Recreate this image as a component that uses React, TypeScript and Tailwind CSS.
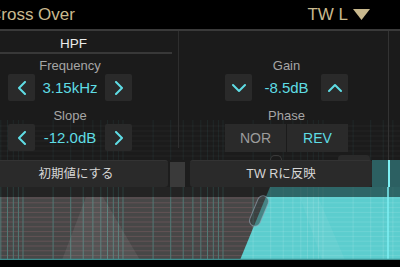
import React from 'react'

const CYAN = '#5fdde5'

function Chevron({ dir }: { dir: 'left' | 'right' | 'up' | 'down' }) {
  const pts = {
    left: '8,1 2,7 8,13',
    right: '2,1 8,7 2,13',
    up: '1,8 7,2 13,8',
    down: '1,2 7,8 13,2',
  }[dir]
  const horiz = dir === 'left' || dir === 'right'
  return (
    <svg width={horiz ? 10 : 14} height={horiz ? 14 : 10} viewBox={horiz ? '0 0 10 14' : '0 0 14 10'}>
      <polyline points={pts} fill="none" stroke={CYAN} strokeWidth={2} strokeLinecap="round" strokeLinejoin="round" />
    </svg>
  )
}

function Btn({ children }: { children: React.ReactNode }) {
  return (
    <div className="flex h-[27px] w-[27px] items-center justify-center rounded-[2px] bg-[#2a2a2a]">
      {children}
    </div>
  )
}

function Stepper({ value, prev, next }: { value: string; prev: 'left' | 'down'; next: 'right' | 'up' }) {
  return (
    <div className="flex items-center">
      <Btn>
        <Chevron dir={prev} />
      </Btn>
      <div className="flex-1 text-center text-[15px] leading-[27px] text-[#5fdde5]">{value}</div>
      <Btn>
        <Chevron dir={next} />
      </Btn>
    </div>
  )
}

function Label({ children, className = '' }: { children: React.ReactNode; className?: string }) {
  return <div className={`h-[16px] text-center text-[13px] leading-[16px] text-[#a6a6a6] ${className}`}>{children}</div>
}

// log-scale x positions for grid lines
const gridX: number[] = []
for (let d = -1; d < 4; d++) {
  for (let k = 1; k < 10; k++) {
    const x = 23 + 100 * d + 100 * Math.log10(k)
    if (x > 0 && x < 400) gridX.push(x)
  }
}

function Graph() {
  const rows: number[] = []
  for (let y = 11; y < 73; y += 4.8) rows.push(y)
  return (
    <svg width={400} height={73} viewBox="0 0 400 73" className="block">
      <defs>
        <clipPath id="teal">
          <polygon points="270,0 400,0 400,73 240,73" />
        </clipPath>
      </defs>
      <rect width={400} height={73} fill="#474747" />
      {rows.map((y) => (
        <line key={y} x1={0} x2={400} y1={y} y2={y} stroke="#645356" strokeWidth={1} />
      ))}
      {gridX.map((x) => (
        <line key={x} x1={x} x2={x} y1={0} y2={73} stroke="#527a76" strokeWidth={1} />
      ))}
      <polygon points="86,10 103,10 140,73 62,73" fill="#ffffff" opacity={0.07} />
      <polygon points="270,0 400,0 400,73 240,73" fill="#5ccdce" />
      <g clipPath="url(#teal)">
        {rows.map((y) => (
          <line key={y} x1={0} x2={400} y1={y} y2={y} stroke="#ffffff" opacity={0.1} />
        ))}
        {gridX.map((x) => (
          <line key={x} x1={x} x2={x} y1={0} y2={73} stroke="#ffffff" opacity={0.12} />
        ))}
        <polygon points="300,10 318,10 345,73 322,73" fill="#ffffff" opacity={0.06} />
      </g>
      <rect width={400} height={10} fill="#000000" opacity={0.5} />
      <line x1={388} x2={388} y1={0} y2={73} stroke="#7ef0f4" strokeWidth={1.5} />
      <rect
        x={-16}
        y={-5.5}
        width={32}
        height={11}
        rx={5.5}
        transform="translate(259 24) rotate(-67.4)"
        fill="#2b3b3b"
        fillOpacity={0.5}
        stroke="#9ab"
        strokeOpacity={0.6}
      />
      <line x1={0} x2={400} y1={72.5} y2={72.5} stroke="#3c8f90" strokeWidth={1.5} />
    </svg>
  )
}

function PanelGrid() {
  return (
    <svg width={400} height={40} viewBox="0 0 400 40" className="absolute bottom-0 left-0">
      {[6, 11, 16, 21, 26, 31, 36].map((y) => (
        <line key={y} x1={0} x2={400} y1={y} y2={y} stroke="#ffffff" opacity={0.035} />
      ))}
      {gridX.map((x) => (
        <line key={x} x1={x} x2={x} y1={0} y2={40} stroke="#5fdde5" opacity={0.06} />
      ))}
    </svg>
  )
}

export default function App() {
  return (
    <div className="relative h-[267px] w-[400px] overflow-hidden bg-black font-['Liberation_Sans','Noto_Sans_CJK_JP',sans-serif]">
      {/* header */}
      <div className="flex h-[29px] items-center justify-between bg-black text-[17px] text-[#c9b98e]">
        <span className="ml-[-11px] whitespace-nowrap">Cross Over</span>
        <div className="mr-[30px] flex items-center gap-[5px]">
          <span>TW L</span>
          <svg width={17} height={11} viewBox="0 0 17 11">
            <polygon points="0,0 17,0 8.5,11" fill="#c9b98e" />
          </svg>
        </div>
      </div>

      {/* panel */}
      <div className="relative flex h-[131px] border-t-2 border-[#3a3a3a] bg-[#1b1b1b]">
        <PanelGrid />
        <div className="relative z-10 w-[178px]">
          <div className="h-[23px] w-[172px] border-b-2 border-[#383838] pr-[25px] pt-[5px] text-center text-[13.5px] leading-[16px] text-[#ececec]">
            HPF
          </div>
          <div className="ml-[8px] mt-[4px] w-[124px]">
            <Label>Frequency</Label>
            <Stepper value="3.15kHz" prev="left" next="right" />
            <Label className="mt-[7px]">Slope</Label>
            <Stepper value="-12.0dB" prev="left" next="right" />
          </div>
        </div>
        <div className="relative z-10 h-[117px] w-[1px] bg-[#2e2e2e]" />
        <div className="relative z-10 ml-[46px] mt-[27px] w-[123px]">
          <Label>Gain</Label>
          <Stepper value="-8.5dB" prev="down" next="up" />
          <Label className="mt-[7px]">Phase</Label>
          <div className="flex h-[28px] gap-[1px] rounded-[2px] bg-[#1b1b1b] text-[14px]">
            <div className="flex flex-1 items-center justify-center bg-[#2a2a2a] text-[#9c9c9c]">NOR</div>
            <div className="flex flex-1 items-center justify-center bg-[#2a2a2a] text-[#5fdde5]">REV</div>
          </div>
        </div>
        {/* handle tabs peeking above buttons */}
        <div className="absolute bottom-0 left-[270px] z-10 h-[5px] w-[12px] rounded-t-full border border-b-0 border-[#3a3a3a]" />
        <div className="absolute bottom-0 left-[338px] z-10 h-[5px] w-[32px] rounded-t-[4px] bg-[#2a2a2a]" />
        <div className="absolute right-[11px] top-0 z-10 h-full w-[1px] bg-[#333]" />
      </div>

      {/* buttons row */}
      <div className="flex h-[27px] bg-[#1d1d1d]">
        <div className="flex w-[168px] items-center justify-center rounded-r-[3px] border-t border-[#333] bg-[#2a2a2a] pr-[16px] text-[12.5px] text-[#d6d6d6]">
          初期値にする
        </div>
        <div className="ml-[2px] mt-[2px] w-[15px] bg-[#3a3a3a]" />
        <div className="ml-[5px] flex w-[182px] items-center justify-center rounded-[3px] border-t border-[#333] bg-[#2a2a2a] text-[12.5px] text-[#d6d6d6]">
          TW Rに反映
        </div>
        <div className="relative flex-1 bg-[#2c6062]">
          <div className="absolute left-[16px] top-0 h-full w-[1.5px] bg-[#7ef0f4]" />
        </div>
      </div>

      <Graph />
    </div>
  )
}
